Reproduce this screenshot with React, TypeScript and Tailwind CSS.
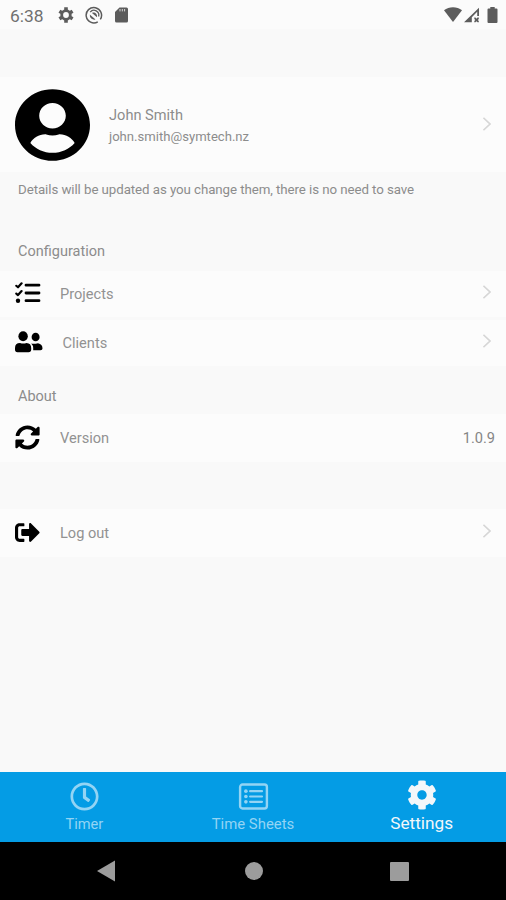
import React from 'react';
import { FaCog, FaRegClock, FaSignOutAlt, FaSyncAlt, FaUserCircle } from 'react-icons/fa';

const Chevron: React.FC = () => (
  <svg className="w-2 h-4 shrink-0" viewBox="0 0 8 16" fill="none" stroke="#d6d6d6" strokeWidth="1.7">
    <path d="M0.4 1.8 L7 8 L0.4 14.2" />
  </svg>
);

const TasksIcon: React.FC = () => (
  <svg className="w-[26px] h-[22px]" viewBox="0 0 26 22" fill="none" stroke="currentColor">
    <path strokeWidth="2.8" strokeLinecap="round" d="M11 3.2H24M11 11H24M11 18.7H24" />
    <path strokeWidth="2.2" strokeLinecap="round" strokeLinejoin="round" d="M1.3 3.8L3 5.3L6.6 1.3M1.3 11.6L3 13.1L6.6 9.1" />
    <circle cx="3" cy="18.7" r="2.2" fill="currentColor" stroke="none" />
  </svg>
);

const PeopleIcon: React.FC = () => (
  <svg className="w-7 h-[22px]" viewBox="0 0 28 22" fill="currentColor">
    <ellipse cx="8.1" cy="5.2" rx="4.7" ry="5" />
    <ellipse cx="20.6" cy="6" rx="4" ry="4.3" />
    <path d="M0 18.5V17Q0 12 5 12Q8.3 13 11.5 12Q16.2 12.2 16.2 17V18.5Q16.2 21.3 13.5 21.3H2.5Q0 21.3 0 18.5z" />
    <path d="M16.2 12.4Q18.5 13.3 23 12.2Q27.5 13 27.5 17.5Q27.5 19.3 25.5 19.3H18.2V17Q18.2 14.3 16.2 12.4z" />
  </svg>
);

const SheetIcon: React.FC = () => (
  <svg className="ml-0.5 w-[31px] h-[27px]" viewBox="0 0 31 28" fill="none" stroke="currentColor">
    <rect x="1.6" y="1.6" width="27.8" height="24.8" rx="2.5" strokeWidth="2.5" />
    <path strokeWidth="2.3" strokeLinecap="round" d="M12 8.5H24.3M12 14H24.3M12 19.5H24.3" />
    <g fill="currentColor" stroke="none">
      <circle cx="7.6" cy="8.5" r="1.9" />
      <circle cx="7.6" cy="14" r="1.9" />
      <circle cx="7.6" cy="19.5" r="1.9" />
    </g>
  </svg>
);

const StatusBar: React.FC = () => (
  <div className="h-[29px] shrink-0 flex items-start bg-[#fbfbfb] text-[#5c5c5c]">
    <span className="ml-2.5 mt-1.5 w-12 text-[17.4px] leading-5 text-[#707070]">6:38</span>
    <svg className="mt-[7px] w-4 h-4" viewBox="0 0 16 16" fill="none" stroke="currentColor">
      <circle cx="8" cy="8" r="4.3" strokeWidth="2.8" />
      <path
        strokeWidth="3.6"
        d="M8 0.3V3M8 13V15.7M1.4 4.2L3.7 5.5M12.3 10.5L14.6 11.8M1.4 11.8L3.7 10.5M12.3 5.5L14.6 4.2"
      />
    </svg>
    <svg className="ml-[11px] mt-1.5 w-[18px] h-[18px]" viewBox="0 0 18 18" fill="none" stroke="currentColor">
      <path d="M12.8 15.8 A7.7 7.7 0 1 1 15.3 13.4" strokeWidth="1.5" />
      <path d="M5.2 6.2 A4.8 4.8 0 0 1 13.6 10.5" strokeWidth="1.3" />
      <path d="M4.8 8.5 A4.6 4.6 0 0 0 10.5 13.5z" fill="currentColor" stroke="none" />
      <path d="M7 7 C9.4 5.6 12.6 8 12 11.2z" fill="currentColor" stroke="none" />
    </svg>
    <svg className="ml-3 mt-[7px] w-[13px] h-4" viewBox="0 0 13 16">
      <path fill="currentColor" d="M4.5 0.5H11.5Q13 0.5 13 2V14Q13 15.5 11.5 15.5H1.5Q0 15.5 0 14V5z" />
      <path stroke="#d8d8d8" strokeWidth="1" d="M5 2v2.4M7.3 2v2.4M9.6 2v2.4" />
    </svg>
    <div className="ml-auto mr-2 mt-[7px] flex">
      <svg className="w-[18px] h-4" viewBox="0 0 18 16" fill="currentColor">
        <path d="M0 3.2 C5 -0.9 13 -0.9 18 3.2 L9 15z" />
      </svg>
      <svg className="ml-0.5 w-4 h-4" viewBox="0 0 16 16" fill="currentColor">
        <path d="M15 0.8 V9 H13.2 V4.8 L7.8 10.2 V15.3 H0z" />
        <path d="M10.3 10.6l1.2 0 1 1.1 1-1.1h1.3v1.3l-1 1 1 1.2v1.2h-1.3l-1-1-1 1h-1.2v-1.2l1-1.2-1-1z" />
      </svg>
      <svg className="ml-[7px] w-[11px] h-4" viewBox="0 0 11 16" fill="currentColor">
        <path d="M3.3 0h4.4v1.5H9.5Q10.5 1.5 10.5 2.5V15Q10.5 16 9.5 16H1.5Q0.5 16 0.5 15V2.5Q0.5 1.5 1.5 1.5H3.3z" />
      </svg>
    </div>
  </div>
);

interface RowProps {
  icon: React.ReactNode;
  label: string;
  labelClass?: string;
  className: string;
  value?: string;
}

const Row: React.FC<RowProps> = ({ icon, label, labelClass = '', className, value }) => (
  <div className={`shrink-0 flex items-center bg-[#fcfcfc] pl-[15px] text-black ${className}`}>
    <div className="w-[45px] shrink-0 pb-0.5">{icon}</div>
    <span className={`text-[14.6px] leading-5 text-[#929292] ${labelClass}`}>{label}</span>
    {value ? (
      <span className="ml-auto mr-[11px] text-[14.6px] leading-5 text-[#858585]">{value}</span>
    ) : (
      <div className="ml-auto mr-[15px] pb-1">
        <Chevron />
      </div>
    )}
  </div>
);

const App: React.FC = () => {
  return (
    <div className="w-full h-[900px] flex flex-col bg-[#f9f9f9] font-['Roboto',sans-serif] overflow-hidden">
      <StatusBar />

      {/* Profile */}
      <div className="mt-[48px] h-[95px] shrink-0 flex items-center bg-[#fcfcfc] pl-[15px]">
        <FaUserCircle className="w-[75px] h-[74px] text-black" preserveAspectRatio="none" />
        <div className="ml-[19px] pt-[3px]">
          <p className="text-[14.6px] leading-[22px] text-[#8c8c8c]">John Smith</p>
          <p className="text-[13.1px] leading-[22px] text-[#8c8c8c]">john.smith@symtech.nz</p>
        </div>
        <div className="ml-auto mr-[15px] pb-0.5">
          <Chevron />
        </div>
      </div>
      <p className="pl-[18px] pt-[9px] h-[71px] shrink-0 text-[13.3px] tracking-[-0.075px] leading-[18px] text-[#8c8c8c]">
        Details will be updated as you change them, there is no need to save
      </p>

      <h2 className="h-[28px] shrink-0 pl-[18px] text-[14.5px] leading-[18px] text-[#8c8c8c]">Configuration</h2>
      <Row className="h-[46px]" icon={<TasksIcon />} label="Projects" />
      <Row className="mt-[3px] h-[46px]" icon={<PeopleIcon />} label="Clients" labelClass="ml-[2.5px]" />
      <h2 className="mt-[22px] h-[26px] shrink-0 pl-[18px] text-[14.5px] leading-[18px] text-[#8c8c8c]">About</h2>
      <Row
        className="h-[48px]"
        icon={<FaSyncAlt className="w-[25px] h-[25px]" />}
        label="Version"
        value="1.0.9"
      />
      <Row
        className="mt-[47px] h-[48px]"
        icon={<FaSignOutAlt className="w-[25px] h-[25px]" />}
        label="Log out"
      />

      {/* Tab bar */}
      <div className="mt-auto h-[70px] shrink-0 grid grid-cols-3 bg-[#049ce5] text-[#93d4f4]">
        <div className="flex flex-col items-center pt-[10px]">
          <FaRegClock className="w-[29px] h-[29px]" />
          <span className="mt-[3px] text-[14.6px] leading-5">Timer</span>
        </div>
        <div className="flex flex-col items-center pt-[11px]">
          <SheetIcon />
          <span className="mt-1 text-[14.9px] leading-5">Time Sheets</span>
        </div>
        <div className="flex flex-col items-center pt-2 text-[#f3f7fa]">
          <FaCog className="w-[30px] h-[30px]" />
          <span className="mt-[3px] text-[17.2px] leading-5">Settings</span>
        </div>
      </div>

      {/* Android navigation */}
      <div className="h-[58px] shrink-0 flex items-center bg-black text-[#9c9c9c]">
        <svg className="ml-[97px] w-[18px] h-[22px]" viewBox="0 0 18 22" fill="currentColor">
          <path d="M18 0.5V21.5L0 11z" />
        </svg>
        <div className="ml-[130px] w-[18px] h-[18px] rounded-full bg-[#9c9c9c]" />
        <div className="ml-[127px] w-[19px] h-[19px] rounded-[1px] bg-[#9c9c9c]" />
      </div>
    </div>
  );
};

export default App;
